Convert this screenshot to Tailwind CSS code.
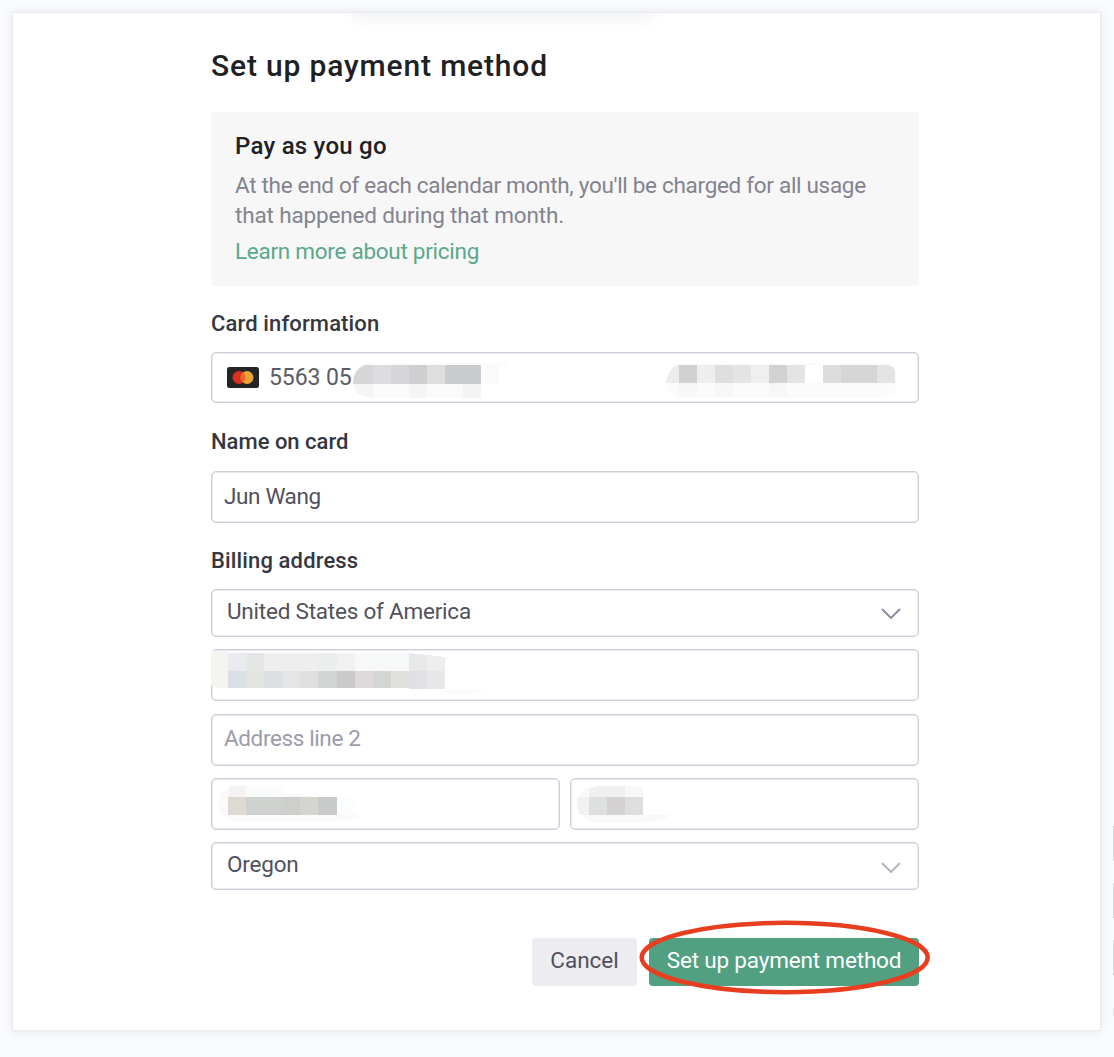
<!DOCTYPE html>
<html lang="en">
<head>
<meta charset="utf-8">
<title>Set up payment method</title>
<script src="https://cdn.jsdelivr.net/npm/@tailwindcss/browser@4"></script>
</head>
<body class="h-[1057px] overflow-hidden bg-[#fafbfe] font-[Roboto,sans-serif] text-[#353740]">
<div class="relative h-[1057px] w-[1114px] pt-3 pl-3">
  <main class="relative h-[1019px] w-[1089px] border border-[#e9eaea] bg-white pt-[33px] pl-[198px] shadow-[0_0_9px_rgba(60,70,80,0.12)]">
    <div class="absolute top-0 left-[317px] h-6 w-[345px] overflow-hidden"><div class="mx-auto -mt-5 h-7 w-[310px] rounded-full bg-[#f4f5f5] blur-[6px]"></div></div>
    <form class="flex w-[708px] flex-col">
      <h1 class="flex h-[40px] items-center pb-px text-[30px] font-medium tracking-[0.84px] text-[#202123]"><span class="whitespace-nowrap">Set up payment method</span></h1>
      <section class="mt-[26px] h-[174px] rounded bg-[#f7f7f7] pt-[19px] pl-6">
        <h2 class="h-[30px] text-2xl leading-[30px] font-medium tracking-[0.24px] text-[#202123]">Pay as you go</h2>
        <p class="mt-[9px] text-[22.5px] leading-[30px] text-[#83838f]"><span class="tracking-[-0.3px] whitespace-nowrap">At the end of each calendar month, you'll be charged for all usage</span><br><span class="tracking-[-0.15px] whitespace-nowrap">that happened during that month.</span></p>
        <a class="mt-[6px] block text-[22.5px] leading-[30px] tracking-[-0.27px] text-[#5aa88c]">Learn more about pricing</a>
      </section>

      <label class="mt-[23px] h-[30px] text-[22px] leading-[30px] font-medium tracking-[0.13px]">Card information</label>
      <div class="relative mt-[13px] flex h-[51px] items-center rounded-[5px] border border-[#cdcdd8] pl-[15px] shadow-[inset_0_0_0_1px_#e9e9ef]">
        <svg class="h-[21px] w-8" viewBox="0 0 32 21"><rect width="32" height="21" rx="2.500" fill="#252525"/><circle cx="12" cy="10.500" r="6.500" fill="#d9301f"/><circle cx="20" cy="10.500" r="6.500" fill="#e9a336"/><path d="M16 5.400a6.500 6.500 0 0 1 0 10.200a6.500 6.500 0 0 1 0-10.200" fill="#e66a2b"/></svg>
        <span class="ml-[10px] pt-px text-[23px] tracking-[-0.1px] whitespace-nowrap text-[#5b5c66]">5563 05</span>
        <svg class="absolute -top-px -left-px" width="708" height="51" viewBox="211 352 708 51" shape-rendering="crispEdges">
          <defs><clipPath id="numClip"><path d="M353 384q0-19 20-21h138v35H373q-18-1-20-14z"/></clipPath><clipPath id="expClip"><path d="M666 383q2-17 18-20h200q12 3 12 12v12q-3 10-20 11H684q-18-3-18-15z"/></clipPath></defs>
          <g clip-path="url(#numClip)"><path fill="#fbfbfb" d="M353 362h154v4H353z"/><path fill="#d6d6d8" d="M353 365h20v19h-20z"/><path fill="#dddddf" d="M373 365h18v19h-18z"/><path fill="#d6d6d8" d="M391 365h18v19h-18z"/><path fill="#cecfd1" d="M409 365h18v19h-18z"/><path fill="#dfdfe0" d="M427 365h18v19h-18z"/><path fill="#cbccce" d="M445 365h36v19h-36z"/><path fill="#fafafa" d="M481 365h18v19h-18z"/><path fill="#f5f5f5" d="M353 384h20v14h-20z"/><path fill="#fafafa" d="M373 384h36v14h-36z"/><path fill="#f5f5f5" d="M409 384h18v14h-18z"/><path fill="#fafafa" d="M427 384h36v14h-36z"/><path fill="#f4f4f4" d="M463 384h18v14h-18z"/></g>
          <g clip-path="url(#expClip)"><path fill="#fbfbfb" d="M666 362h230v36H666z"/><path fill="#ececec" d="M666 365h13v18h-13z"/><path fill="#d1d1d1" d="M679 365h18v18h-18z"/><path fill="#eeeeee" d="M697 365h18v18h-18z"/><path fill="#dedede" d="M715 365h18v18h-18z"/><path fill="#e4e4e4" d="M733 365h18v18h-18z"/><path fill="#efefef" d="M751 365h18v18h-18z"/><path fill="#d2d2d2" d="M769 365h18v18h-18z"/><path fill="#e4e4e4" d="M787 365h18v18h-18z"/><path fill="#fff" d="M805 365h18v18h-18z"/><path fill="#dddddd" d="M823 365h18v18h-18z"/><path fill="#d6d6d6" d="M841 365h36v18h-36z"/><path fill="#e4e4e4" d="M877 365h18v18h-18z"/><path fill="#f7f7f7" d="M679 383h18v14h-18zM715 383h18v14h-18zM769 383h18v14h-18z"/></g>
        </svg>
      </div>

      <label class="mt-6 h-[30px] text-[22px] leading-[30px] font-medium">Name on card</label>
      <div class="mt-[14px] flex h-[52px] items-center rounded-[5px] border border-[#cdcdd8] pb-px pl-[12px] text-[22.5px] tracking-[-0.36px] text-[#50515c] shadow-[inset_0_0_0_1px_#e9e9ef]">Jun Wang</div>

      <label class="mt-[23px] h-[30px] text-[22px] leading-[30px] font-medium tracking-[0.14px]">Billing address</label>
      <div class="mt-[13px] flex h-[48px] items-center justify-between rounded-[5px] border border-[#cdcdd8] pr-[17px] pb-[3px] pl-[15px] text-[22.5px] tracking-[-0.22px] text-[#50515c] shadow-[inset_0_0_0_1px_#e9e9ef]"><span>United States of America</span>
        <svg class="mt-[5px] h-3 w-5" viewBox="0 0 20 12" fill="none" stroke="#8e8ea0" stroke-width="2" stroke-linecap="round" stroke-linejoin="round"><path d="M1.500 1.500 10 10l8.500-8.500"/></svg></div>
      <div class="relative mt-[12px] h-[52px] rounded-[5px] border border-[#cdcdd8] shadow-[inset_0_0_0_1px_#e9e9ef]">
        <svg class="absolute -top-px -left-px" width="708" height="52" viewBox="211 649 708 52" shape-rendering="crispEdges">
          <path fill="#f5f4f0" d="M211 651h17v37h-11l-6-3z"/><path fill="#e9ebee" d="M228 653h18v18h-18z"/><path fill="#e4e7e6" d="M246 653h18v18h-18z"/><path fill="#eeeeee" d="M264 653h54v18h-54z"/><path fill="#ebeeed" d="M318 653h19v18h-19z"/><path fill="#f1f1f1" d="M337 653h18v18h-18z"/><path fill="#f7f9f8" d="M355 653h54v18h-54z"/><path fill="#dbdfe6" d="M228 671h18v17h-18z"/><path fill="#e3e4de" d="M246 671h18v17h-18z"/><path fill="#dcdfe1" d="M264 671h18v17h-18z"/><path fill="#e5e5e5" d="M282 671h18v17h-18z"/><path fill="#e0e0df" d="M300 671h18v17h-18z"/><path fill="#d2d5d3" d="M318 671h19v17h-19z"/><path fill="#cacaca" d="M337 671h18v17h-18z"/><path fill="#dedada" d="M355 671h18v17h-18z"/><path fill="#d3d6d4" d="M373 671h18v17h-18z"/><path fill="#e2e0dd" d="M391 671h18v17h-18z"/><path fill="#e6e8ea" d="M409 653l10 1 8 1v16h-18z"/><path fill="#eeeeef" d="M427 655l18 2v14h-18z"/><path fill="#dfe1e4" d="M409 671h18v18h-18z"/><path fill="#e7e7e8" d="M427 671h18v18h-18z"/><path fill="#fafafa" d="M427 690h60q-14 5-30 4z"/>
        </svg>
      </div>
      <div class="mt-[13px] flex h-[52px] items-center rounded-[5px] border border-[#cdcdd8] pb-[2px] pl-[12px] text-[22.5px] tracking-[-0.38px] text-[#9c9cab] shadow-[inset_0_0_0_1px_#e9e9ef]">Address line 2</div>
      <div class="mt-[12px] grid h-[52px] grid-cols-2 gap-[10px]">
        <div class="relative rounded-[5px] border border-[#cdcdd8] shadow-[inset_0_0_0_1px_#e9e9ef]">
          <svg class="absolute -top-px -left-px" width="349" height="52" viewBox="211 778 349 52" shape-rendering="crispEdges">
            <path fill="#fafafa" d="M218 802q2-15 20-16h8v10h64v19h55q-20 8-55 7h-73q-18-2-19-20z"/><path fill="#f5f3f1" d="M229 786h17v11h-17z"/><path fill="#fbfdfd" d="M246 786h36v11h-36z"/><path fill="#ddd9d3" d="M228 797h18v18h-18z"/><path fill="#cfd1cf" d="M246 797h36v18h-36z"/><path fill="#cdcfcc" d="M282 797h18v18h-18z"/><path fill="#d4d5cf" d="M300 797h18v18h-18z"/><path fill="#c9cbca" d="M318 797h19v18h-19z"/><path fill="#fbfdfe" d="M337 797h18v18h-18z"/>
          </svg>
        </div>
        <div class="relative rounded-[5px] border border-[#cdcdd8] shadow-[inset_0_0_0_1px_#e9e9ef]">
          <svg class="absolute -top-px -left-px" width="349" height="52" viewBox="570 778 349 52" shape-rendering="crispEdges">
            <path fill="#f9f9f9" d="M577 802q2-13 18-16h30v29h46q-12 8-40 8h-33q-18 0-21-21z"/><path fill="#f0f0f0" d="M589 789l8-3h28v11h-36z"/><path fill="#f7f9f8" d="M625 786h18v11h-18z"/><path fill="#f4f2f1" d="M577 797h12v18h-9q-3-5-3-18z"/><path fill="#dee0df" d="M589 797h18v18h-18z"/><path fill="#d4d2d3" d="M607 797h18v18h-18z"/><path fill="#dcdfde" d="M625 797h18v18h-18z"/>
          </svg>
        </div>
      </div>
      <div class="mt-[12px] flex h-[48px] items-center justify-between rounded-[5px] border border-[#cdcdd8] pr-[17px] pb-[2px] pl-[15px] text-[22.5px] tracking-[-0.2px] text-[#50515c] shadow-[inset_0_0_0_1px_#e9e9ef]"><span>Oregon</span>
        <svg class="mt-[5px] h-3 w-5" viewBox="0 0 20 12" fill="none" stroke="#b4b4c0" stroke-width="2" stroke-linecap="round" stroke-linejoin="round"><path d="M1.500 1.500 10 10l8.500-8.500"/></svg></div>

      <div class="mt-[48px] flex justify-end gap-3">
        <button type="button" class="h-12 w-[105px] rounded-[4px] bg-[#ececf1] pb-[2px] text-[22.5px] text-[#50515c]">Cancel</button>
        <button type="button" class="relative h-12 w-[270px] rounded-[4px] bg-[#50a081] pb-[2px] text-[22.5px] tracking-[-0.17px] text-white">Set up payment method
          <svg class="absolute -top-[19px] -left-[10px] h-[76px] w-[293px] overflow-visible" viewBox="639 919 293 76" fill="none" stroke="#e83e20" stroke-width="4.500"><ellipse cx="784.700" cy="957.500" rx="143" ry="34.700"/></svg>
        </button>
      </div>
    </form>
  </main>
  <div class="absolute top-[826px] right-0 flex w-px flex-col gap-[22px]">
    <i class="h-[35px] bg-[#d6d7db]"></i><i class="h-[35px] bg-[#d6d7db]"></i><i class="h-[35px] bg-[#d6d7db]"></i><i class="mt-[11px] h-2 bg-[#e4e5e9]"></i>
  </div>
</div>
</body>
</html>
